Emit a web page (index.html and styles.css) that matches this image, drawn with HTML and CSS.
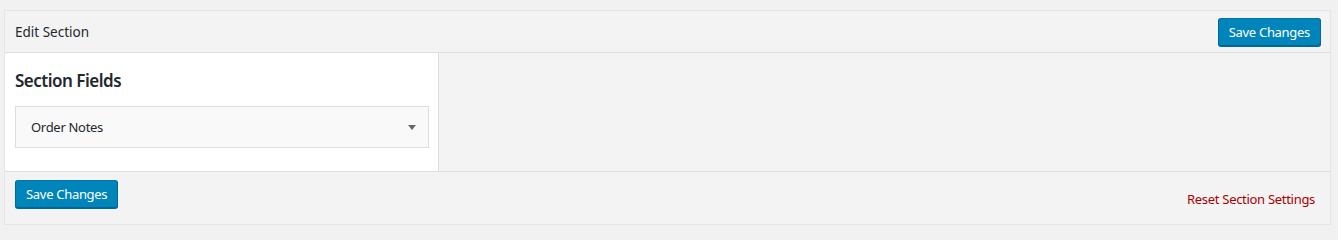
FILE: index.html
```html
<!DOCTYPE html>
<html lang="en">
<head>
<meta charset="utf-8">
<title>Edit Section</title>
<link rel="stylesheet" href="styles.css">
</head>
<body>
<div class="panel">
  <div class="panel-header">
    <span class="panel-title">Edit Section</span>
    <button class="btn-primary" type="button">Save Changes</button>
  </div>
  <div class="panel-body">
    <div class="fields-col">
      <h2 class="fields-title">Section Fields</h2>
      <div class="select">
        <span class="select-value">Order Notes</span>
        <span class="select-arrow"></span>
      </div>
    </div>
    <div class="empty-col"></div>
  </div>
  <div class="panel-footer">
    <button class="btn-primary" type="button">Save Changes</button>
    <a class="reset-link" href="#">Reset Section Settings</a>
  </div>
</div>
</body>
</html>
```

FILE: styles.css
```css
html, body {
  margin: 0;
  padding: 0;
  background: #f1f1f1;
  font-family: "Noto Sans", "Open Sans", sans-serif;
  font-size: 13px;
  color: #23282d;
}

.panel {
  margin: 10px 7px 0 4px;
  border: 1px solid #e5e5e5;
  background: #f3f3f3;
}

.panel-header {
  height: 41px;
  border-bottom: 1px solid #dedede;
  display: flex;
  align-items: center;
  justify-content: space-between;
  padding: 0 9px 0 10px;
}

.panel-title {
  font-size: 13.5px;
  line-height: 20px;
}

.btn-primary {
  box-sizing: border-box;
  height: 28px;
  padding: 0 10px 1px;
  font-family: inherit;
  font-size: 13px;
  letter-spacing: -0.3px;
  line-height: 26px;
  color: #fff;
  background: #0085ba;
  border: 1px solid;
  border-color: #0073aa #006799 #006799;
  border-radius: 3px;
  box-shadow: 0 1px 0 #006799;
  cursor: pointer;
}

.panel-body {
  display: flex;
  border-bottom: 1px solid #dedede;
}

.fields-col {
  box-sizing: border-box;
  width: 434px;
  background: #fff;
  border-right: 1px solid #dedede;
  padding: 14px 9px 23px 10px;
}

.fields-title {
  margin: 0 0 11px;
  font-size: 17px;
  letter-spacing: -0.5px;
  line-height: 28px;
  font-weight: 600;
  color: #23282d;
}

.select {
  box-sizing: border-box;
  width: 414px;
  height: 42px;
  border: 1px solid #dddddd;
  background: #f9f9f9;
  display: flex;
  align-items: center;
  justify-content: space-between;
  padding: 0 12px 0 15px;
}

.select-value {
  font-size: 13px;
  letter-spacing: -0.3px;
  color: #23282d;
}

.select-arrow {
  width: 0;
  height: 0;
  border-left: 4px solid transparent;
  border-right: 4px solid transparent;
  border-top: 5px solid #666;
}

.empty-col {
  flex: 1;
}

.panel-footer {
  display: flex;
  align-items: flex-start;
  justify-content: space-between;
  height: 28px;
  padding: 8px 15px 16px 10px;
}

.reset-link {
  margin-top: 10px;
  font-size: 13px;
  letter-spacing: -0.3px;
  line-height: 18px;
  color: #a00;
  text-decoration: none;
}
```
